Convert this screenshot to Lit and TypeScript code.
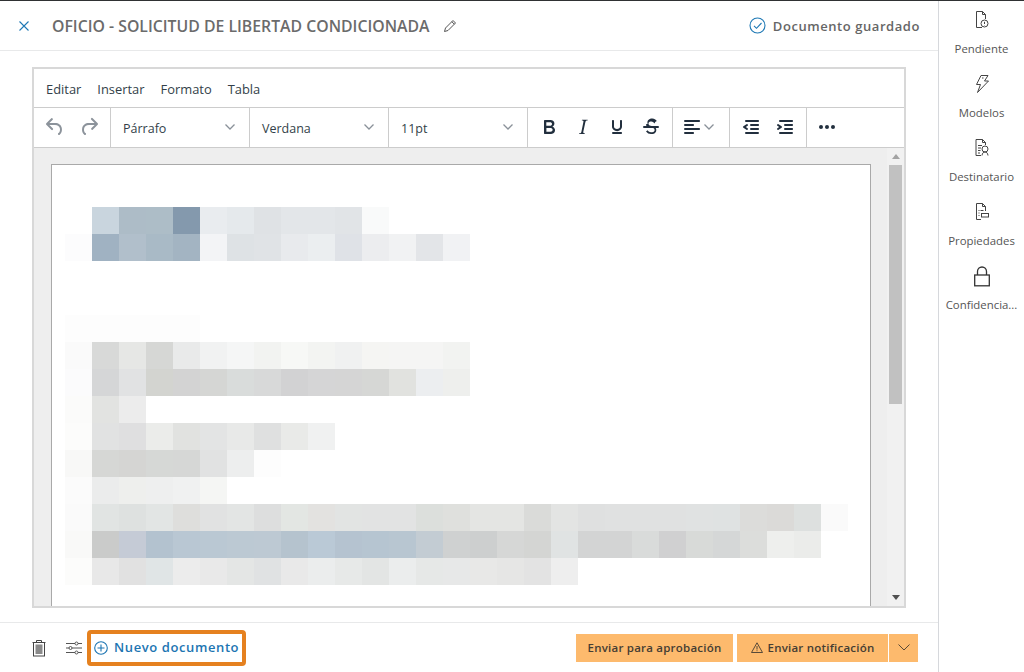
import { LitElement, html, css, svg } from "lit";
import { customElement } from "lit/decorators.js";

const P: Record<string, string> = {
  undo: "M6.4 8H12c3.7 0 6.2 2 6.8 5.1.6 2.7-.4 5.6-2.3 6.8a1 1 0 0 1-1-1.8c1.1-.6 1.8-2.7 1.4-4.6-.5-2.1-2.1-3.5-4.9-3.5H6.4l3.3 3.3a1 1 0 1 1-1.4 1.4l-5-5a1 1 0 0 1 0-1.4l5-5a1 1 0 0 1 1.4 1.4L6.4 8z",
  redo: "M17.6 10H12c-2.8 0-4.4 1.4-4.9 3.5-.4 2 .3 4 1.4 4.6a1 1 0 1 1-1 1.8c-2-1.2-2.9-4.1-2.3-6.8.6-3 3-5.1 6.8-5.1h5.6l-3.3-3.3a1 1 0 1 1 1.4-1.4l5 5a1 1 0 0 1 0 1.4l-5 5a1 1 0 0 1-1.4-1.4l3.3-3.3z",
  bold: "M7.8 19c-.3 0-.5 0-.6-.2l-.2-.5V5.7c0-.2 0-.4.2-.5l.6-.2h5c1.5 0 2.7.3 3.5 1 .7.6 1.1 1.4 1.1 2.5a3 3 0 0 1-.6 1.9c-.4.6-1 1-1.6 1.2.4.1.9.3 1.3.6s.8.7 1 1.2c.4.4.5 1 .5 1.6 0 1.3-.4 2.3-1.3 3-.8.7-2.1 1-3.8 1H7.8zm5-8.3c.6 0 1.2-.1 1.6-.5.4-.3.6-.7.6-1.3 0-1.1-.8-1.7-2.3-1.7H9.3v3.5h3.4zm.5 6c.7 0 1.3-.1 1.7-.4.4-.4.6-.9.6-1.5s-.2-1-.7-1.4c-.4-.3-1-.4-2-.4H9.4v3.8h4z",
  italic: "M16.7 4.7l-.1.9h-.3c-.6 0-1 0-1.4.3-.3.3-.4.6-.5 1.1l-2.1 9.8v.6c0 .5.4.8 1.4.8h.2l-.2.8H8l.2-.8h.2c1.1 0 1.8-.5 2-1.5l2-9.8.1-.5c0-.6-.4-.8-1.4-.8h-.3l.2-.9h5.8z",
  underline: "M16 5c.6 0 1 .4 1 1v5.5a4 4 0 0 1-.4 1.8l-1 1.4a5.3 5.3 0 0 1-5.5 1 5 5 0 0 1-1.6-1c-.5-.4-.8-.9-1.1-1.4a4 4 0 0 1-.4-1.8V6c0-.6.4-1 1-1s1 .4 1 1v5.5c0 .3 0 .6.2 1l.6.7a3.3 3.3 0 0 0 2.2.8 3.4 3.4 0 0 0 2.2-.8c.3-.2.4-.5.6-.8l.2-.9V6c0-.6.4-1 1-1zM8 17h8c.6 0 1 .4 1 1s-.4 1-1 1H8a1 1 0 0 1 0-2z",
  strike: "M15.6 8.5c-.5-.7-1-1.1-1.3-1.3-.6-.4-1.3-.6-2-.6-2.7 0-2.8 1.7-2.8 2.1 0 1.6 1.8 2 3.2 2.3 4.4.9 4.6 2.8 4.6 3.9 0 1.4-.7 4.1-5 4.1A6.2 6.2 0 0 1 7 16.4l1.5-1.1c.4.6 1.6 2 3.7 2 1.6 0 2.5-.4 3-1 .3-.4.4-.9.4-1.4 0-.8-.4-1.6-3.2-2.3-1.6-.3-2.6-.7-3.4-1.5h-.1l-1-.2c-.5 0-.9-.4-.9-.9s.4-1 1-1h.6c-.1-.5-.2-1-.2-1.4 0-1.4 1-4 4.8-4 1.2 0 2.2.3 3 .8.5.3 1 .8 1.6 1.5l-1.6 1zM5 11h14a1 1 0 0 1 0 2H5a1 1 0 0 1 0-2z",
  align: "M5 5h14c.6 0 1 .4 1 1s-.4 1-1 1H5a1 1 0 1 1 0-2zm0 4h8c.6 0 1 .4 1 1s-.4 1-1 1H5a1 1 0 1 1 0-2zm0 8h8c.6 0 1 .4 1 1s-.4 1-1 1H5a1 1 0 0 1 0-2zm0-4h14c.6 0 1 .4 1 1s-.4 1-1 1H5a1 1 0 0 1 0-2z",
  outdent: "M7 5h12c.6 0 1 .4 1 1s-.4 1-1 1H7a1 1 0 1 1 0-2zm5 4h7c.6 0 1 .4 1 1s-.4 1-1 1h-7a1 1 0 0 1 0-2zm0 4h7c.6 0 1 .4 1 1s-.4 1-1 1h-7a1 1 0 0 1 0-2zm-5 4h12a1 1 0 0 1 0 2H7a1 1 0 0 1 0-2zm1.6-3.8a1 1 0 0 1-1.2 1.6l-3-2a1 1 0 0 1 0-1.6l3-2a1 1 0 0 1 1.2 1.6L6.8 12l1.8 1.2z",
  indent: "M7 5h12c.6 0 1 .4 1 1s-.4 1-1 1H7a1 1 0 1 1 0-2zm5 4h7c.6 0 1 .4 1 1s-.4 1-1 1h-7a1 1 0 0 1 0-2zm0 4h7c.6 0 1 .4 1 1s-.4 1-1 1h-7a1 1 0 0 1 0-2zm-5 4h12a1 1 0 0 1 0 2H7a1 1 0 0 1 0-2zm-2.6-3.8L6.2 12l-1.8-1.2a1 1 0 0 1 1.2-1.6l3 2a1 1 0 0 1 0 1.6l-3 2a1 1 0 1 1-1.2-1.6z",
  more: "M6 10a2 2 0 0 0-2 2c0 1.1.9 2 2 2a2 2 0 0 0 2-2 2 2 0 0 0-2-2zm12 0a2 2 0 0 0-2 2c0 1.1.9 2 2 2a2 2 0 0 0 2-2 2 2 0 0 0-2-2zm-6 0a2 2 0 0 0-2 2c0 1.1.9 2 2 2a2 2 0 0 0 2-2 2 2 0 0 0-2-2z",
};

const ROWS: string[][] = [
  ["ffffff","c9d5de","adbcc7","adbdc7","8499ad","e9ecef","e5e9ec","dfe2e5","e3e6e9","e3e6e9","e1e4e7","f9fafa"],
  ["fcfcfd","a0b2c2","b1bfcb","a9bac6","a3b4c2","f3f4f6","dee2e5","e0e3e6","e8eaed","ebeef0","dfe2e7","ecedef","f1f2f3","e3e5e8","f1f2f4"],
  [],
  [],
  ["fdfdfd","fdfdfd","fdfdfd","fdfdfd","fdfdfd"],
  ["fafafa","d8d9d8","e6e7e5","d6d7d5","e9eaea","f1f2f2","f5f6f6","f2f3f1","f7f8f6","f3f4f2","f0f1f1","f5f5f3","f5f5f4","f5f5f4","f2f3f1"],
  ["fbfbfc","d5d6d7","e1e2e3","d3d4d0","d3d3d3","d5d6d4","d9dcdb","d8d9d9","d2d2d3","d5d5d6","d5d5d5","d6d7d5","e1e2df","eceef0","eeefed"],
  ["fbfbfa","e2e3e1","ececec"],
  ["fcfcfb","e1e2e2","dfdfe0","ebecea","e1e2e0","e3e4e4","e8e9e8","dfe0e0","e9eae8","f0f1f1"],
  ["f8f8f7","d6d7d5","d5d5d3","d6d8d6","d6d7d6","e1e2e2","edeeee","fdfdfd"],
  ["fbfbfb","ebecec","eeefed","eeefef","f0f1f1","f5f6f4"],
  ["fafafa","e1e4e3","dee1e0","e2e5e4","dededc","e1e2e2","e3e5e4","dddede","e3e6e3","e3e2e0","e2e4e3","e2e3e3","e2e3e3","dcdfdc","dfe0dd","e4e5e3","e4e5e3","dadbd9","e3e4e3","dfe0e0","e0e1e1","e0e1e1","e0e1e1","e0e2e2","dfe2e2","dcdcda","dbdad8","dde0df","fafafa"],
  ["f9f9f8","cacbca","c5cbd6","b3c2cf","b9c7d3","bac8d3","bcc9d3","bdc9d3","b5c3ce","bac9d6","b5c3d0","b6c5d1","b8c6d1","c3ccd3","cfd1d1","cdcfcf","d6d7d6","d4d5d3","e0e3e3","d3d4d4","d3d4d4","d9dbda","d0d0d1","d8dad8","d5d7d7","dcdddb","eeefed","ebecea"],
  ["fcfcfb","e8e8e8","e1e1e1","e0e5e6","ececec","e9e9e9","e4e6e5","e0e2e3","e9e9e9","ebeded","e7e9e8","e3e5e4","ebeded","e6e8e7","e7e8e8","e8e8e7","e6e6e5","e3e3e3","eeeeee"],
];

const chevron = svg`<svg class="chev" viewBox="0 0 10 10" width="10" height="10"><path d="M.5 2.5 5 7l4.5-4.5" fill="none" stroke="currentColor" stroke-width="1.3"/></svg>`;

const sideIcons = [
  svg`<svg width="18" height="18" viewBox="0 0 18 18" fill="none" stroke="#444" stroke-width="1"><path d="M9 16.500H3.500V.5h6l3 3v4.500"/><path d="M9.500.5v3h3"/><circle cx="11.500" cy="12.500" r="3.500"/><path d="M11.500 10.800v2.200"/><path d="M11.500 14v.4"/></svg>`,
  svg`<svg width="18" height="18" viewBox="0 0 18 18" fill="none" stroke="#444" stroke-width="1"><path d="M8 .5h7l-3.500 5.500h4L4.500 17.500l3-8H3.500z"/><path d="M9 3h1.500"/></svg>`,
  svg`<svg width="18" height="18" viewBox="0 0 18 18" fill="none" stroke="#444" stroke-width="1"><path d="M8 16.500H3V.5h6.500l3 3v2.500"/><path d="M9.500.5v3h3"/><path d="M5 6.500h4M5 9h3M5 11.500h2.500M5 14h2"/><circle cx="12" cy="10" r="3"/><path d="M9 16.500c.3-2.500 1.500-3.500 3-3.500s2.700 1 3 3.500"/></svg>`,
  svg`<svg width="18" height="18" viewBox="0 0 18 18" fill="none" stroke="#444" stroke-width="1"><path d="M12.500 8V3.500l-3-3h-6v16H8"/><path d="M9.500.5v3h3"/><path d="M5.500 7.500h1M7.500 7.500h3M5.500 10h1M5.500 12.500h1"/><rect x="8.500" y="10.500" width="7" height="3.500"/></svg>`,
  svg`<svg width="18" height="22" viewBox="0 0 18 22" fill="none" stroke="#333" stroke-width="1.300"><rect x="1.700" y="10" width="14.600" height="10.800"/><path d="M4.500 10V6.500a4.500 4.500 0 0 1 9 0V10"/></svg>`,
];

@customElement("app-root")
export class AppRoot extends LitElement {
  static styles = css`
    :host { display: flex; width: 1024px; height: 672px; box-sizing: border-box; border-top: 1px solid #2f3133; background: #fff; font-family: "Open Sans", "Liberation Sans", sans-serif; color: #444; overflow: hidden; }
    * { box-sizing: border-box; }
    .main { width: 938px; display: flex; flex-direction: column; }
    .side { width: 86px; border-left: 1px solid #d6d8dc; display: flex; flex-direction: column; align-items: center; }
    .side-item { height: 64px; width: 100%; display: flex; flex-direction: column; align-items: center; font-size: 11.4px; color: #555; line-height: 16px; white-space: nowrap; }
    .side-icon { height: 39px; padding-bottom: 2px; display: flex; justify-content: center; align-items: center; }
    .side-label { margin-top: 1px; }
    .head { height: 50px; border-bottom: 1px solid #e8e9ea; display: flex; align-items: center; padding: 0 18px 0 18px; flex: none; }
    .x { width: 34px; display: flex; }
    .title { font-size: 15.8px; font-weight: 600; color: #6b6b6b; white-space: nowrap; }
    .pencil { margin-left: 13px; display: flex; }
    .saved { margin-left: auto; display: flex; align-items: center; gap: 7px; font-size: 13px; font-weight: 600; color: #666; letter-spacing: .56px; }
    .content { flex: 1; padding: 16px 32px 14px 32px; display: flex; min-height: 0; }
    .editor { flex: 1; border: 2px solid #d8d8d8; display: flex; flex-direction: column; min-height: 0; }
    .menubar { height: 39px; display: flex; align-items: center; padding: 1px 0 0 12px; gap: 16px; font-size: 12.9px; color: #333f49; flex: none; border-bottom: 1px solid #ccc; }
    .toolbar { height: 40px; display: flex; border-bottom: 1px solid #ccc; flex: none; color: #222f3e; }
    .grp { display: flex; align-items: center; border-right: 1px solid #ccc; padding: 0 4px; }
    .grp.last { border-right: 0; }
    .grp.undo { width: 77px; }
    .btn { width: 34px; height: 34px; display: flex; align-items: center; justify-content: center; margin-top: -2px; }
    .btn svg { width: 24px; height: 24px; fill: currentColor; }
    .btn.off { color: #8c939b; }
    .select { width: 139px; padding: 0 14px 0 12px; justify-content: space-between; font-size: 12.5px; color: #333f49; }
    .select span { margin-top: 2px; }
    .chev { color: #8a9199; flex: none; margin-top: -2px; }
    .alignb { width: 57px; padding: 0 0 0 2px; }
    .alignb .btn { width: 34px; }
    .alignb .chev { margin-left: -5px; }
    .grp.ind { width: 77px; }
    .grp.more { padding-left: 3px; }
    .body { flex: 1; display: flex; background: #eeeeee; min-height: 0; }
    .paper-wrap { flex: 1; padding: 16px 16px 0 17px; min-width: 0; }
    .paper { height: 100%; background: #fff; border: 1px solid #a9a9a9; border-bottom: 0; padding: 42px 0 0 13px; overflow: hidden; }
    .row { display: flex; height: 27px; }
    .cell { width: 27px; flex: none; }
    .scroll { width: 17px; background: #f1f1f1; display: flex; flex-direction: column; align-items: center; padding: 0 2px; flex: none; }
    .arrow { height: 17px; display: flex; align-items: center; justify-content: center; flex: none; }
    .thumb { width: 13px; height: 239px; background: #c1c1c1; flex: none; }
    .spacer { flex: 1; }
    .foot { flex: none; height: 50px; border-top: 1px solid #e8e9ea; display: flex; align-items: center; padding: 0 20px 0 29px; }
    .ico { display: flex; justify-content: center; }
    .ico.trash { width: 20px; }
    .ico.sliders { width: 20px; margin-left: 15px; }
    .new { margin-left: 3px; height: 36px; width: 159px; border: 4px solid #e5811f; border-radius: 4px; display: flex; align-items: center; gap: 6px; padding: 0 0 2px 3px; color: #1c75b2; font-size: 13px; font-weight: 600; letter-spacing: .6px; white-space: nowrap; }
    .new svg { margin-top: 2px; }
    .actions { margin-left: auto; display: flex; align-items: stretch; height: 28px; color: #453d33; font-size: 11.5px; font-weight: 600; letter-spacing: .22px; }
    .act { background: #fdba6d; display: flex; align-items: center; justify-content: center; white-space: nowrap; gap: 5px; }
    .a1 { width: 157px; margin-right: 4px; }
    .a2 { width: 151px; margin-right: 1px; }
    .a3 { width: 29px; }
  `;

  private icon(n: string, cls = "") {
    return html`<div class="btn ${cls}"><svg viewBox="0 0 24 24"><path d=${P[n]}></path></svg></div>`;
  }

  render() {
    const side = ["Pendiente", "Modelos", "Destinatario", "Propiedades", "Confidencia..."];
    return html`
      <div class="main">
        <div class="head">
          <div class="x"><svg width="12" height="12" viewBox="0 0 12 12"><path d="M1.500 1.500l9 9M10.500 1.500l-9 9" stroke="#1f79b5" stroke-width="1.100" fill="none"/></svg></div>
          <div class="title">OFICIO - SOLICITUD DE LIBERTAD CONDICIONADA</div>
          <div class="pencil"><svg width="14" height="14" viewBox="0 0 14 14" fill="none" stroke="#555" stroke-width="1"><path d="M1.500 12.500l1-3.500 7.500-7.500 2.500 2.500-7.500 7.500z"/><path d="M8.800 2.700l2.500 2.500"/></svg></div>
          <div class="saved"><svg width="17" height="17" viewBox="0 0 17 17" fill="none" stroke="#1f79b5" stroke-width="1.100"><circle cx="8.500" cy="8.500" r="7.500"/><path d="M5 8.800l2.500 2.500L12.500 6"/></svg>Documento guardado</div>
        </div>
        <div class="content">
          <div class="editor">
            <div class="menubar"><span>Editar</span><span>Insertar</span><span>Formato</span><span>Tabla</span></div>
            <div class="toolbar">
              <div class="grp undo">${this.icon("undo", "off")}${this.icon("redo", "off")}</div>
              <div class="grp select"><span>Párrafo</span>${chevron}</div>
              <div class="grp select"><span>Verdana</span>${chevron}</div>
              <div class="grp select"><span>11pt</span>${chevron}</div>
              <div class="grp">${this.icon("bold")}${this.icon("italic")}${this.icon("underline")}${this.icon("strike")}</div>
              <div class="grp alignb">${this.icon("align")}${chevron}</div>
              <div class="grp ind">${this.icon("outdent")}${this.icon("indent")}</div>
              <div class="grp last more">${this.icon("more")}</div>
            </div>
            <div class="body">
              <div class="paper-wrap">
                <div class="paper">
                  ${ROWS.map((r) => html`<div class="row">${r.map((c) => html`<div class="cell" style="background:#${c}"></div>`)}</div>`)}
                </div>
              </div>
              <div class="scroll">
                <div class="arrow"><svg width="8" height="5" viewBox="0 0 8 5"><path d="M0 5l4-5 4 5z" fill="#a3a3a3"/></svg></div>
                <div class="thumb"></div>
                <div class="spacer"></div>
                <div class="arrow"><svg width="8" height="5" viewBox="0 0 8 5"><path d="M0 0l4 5 4-5z" fill="#505050"/></svg></div>
              </div>
            </div>
          </div>
        </div>
        <div class="foot">
          <div class="ico trash"><svg width="14" height="18" viewBox="0 0 14 18" fill="none" stroke="#444" stroke-width="1"><path d="M.5 3.500h13M4.500 3.500V1.500h5v2"/><rect x="1.500" y="3.500" width="11" height="13.500"/><rect x="3.500" y="5.500" width="7" height="9.500" fill="#8a8a8a" stroke="none"/></svg></div>
          <div class="ico sliders"><svg width="16" height="14" viewBox="0 0 16 14" fill="none" stroke="#555" stroke-width="1"><path d="M0 2.500h9M12 2.500h4M0 7h3M6 7h10M0 11.500h9M12 11.500h4"/><circle cx="10.500" cy="2.500" r="1.500"/><circle cx="4.500" cy="7" r="1.500"/><circle cx="10.500" cy="11.500" r="1.500"/></svg></div>
          <div class="new"><svg width="14" height="14" viewBox="0 0 14 14" fill="none" stroke="#1c75b2" stroke-width="1.100"><circle cx="7" cy="7" r="6.300"/><path d="M7 3.500v7M3.500 7h7"/></svg>Nuevo documento</div>
          <div class="actions">
            <div class="act a1">Enviar para aprobación</div>
            <div class="act a2"><svg width="12" height="11" viewBox="0 0 12 11" fill="none" stroke="#453d33" stroke-width=".9"><path d="M6 .8l5.500 9.700H.5z"/><path d="M6 4v3.500M6 8.300v.9"/></svg>Enviar notificación</div>
            <div class="act a3"><svg width="12" height="7" viewBox="0 0 12 7" fill="none" stroke="#5a4a36" stroke-width="1"><path d="M.5.500 6 6l5.500-5.500"/></svg></div>
          </div>
        </div>
      </div>
      <div class="side">
        ${side.map((s, i) => html`<div class="side-item"><div class="side-icon">${sideIcons[i]}</div><div class="side-label">${s}</div></div>`)}
      </div>
    `;
  }
}
